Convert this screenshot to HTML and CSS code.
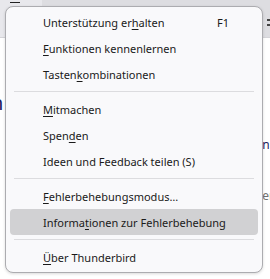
FILE: index.html
```html
<!DOCTYPE html>
<html lang="de">
<head>
    <meta charset="UTF-8">
    <link rel="stylesheet" href="styles.css">
    <title>Hilfe-Menü</title>
</head>
<body>
    <div class="toolbar">
        <div class="tab"><span class="tab-line"></span></div>
        <div class="toolbar-rest"><span class="burger"></span></div>
    </div>
    <div class="page">
        <div class="page-left">
            <span class="frag-big">n</span>
            <span class="frag-small">i:</span>
            <span class="frag-small">t</span>
        </div>
        <div class="page-right">
            <span class="frag-dark">n</span>
            <span class="frag-gray">er</span>
        </div>
    </div>

    <div class="menu">
        <div class="item"><span class="label">Unterstützung er<u>h</u>alten</span><span class="key">F1</span></div>
        <div class="item"><span class="label"><u>F</u>unktionen kennenlernen</span></div>
        <div class="item"><span class="label">Tasten<u>k</u>ombinationen</span></div>
        <div class="sep"></div>
        <div class="item"><span class="label"><u>M</u>itmachen</span></div>
        <div class="item"><span class="label">Spen<u>d</u>en</span></div>
        <div class="item"><span class="label">Ideen und Feedback teilen (S)</span></div>
        <div class="sep"></div>
        <div class="item"><span class="label"><u>F</u>ehlerbehebungsmodus…</span></div>
        <div class="item active"><span class="label">Informa<u>t</u>ionen zur Fehlerbehebung</span></div>
        <div class="sep"></div>
        <div class="item"><span class="label"><u>Ü</u>ber Thunderbird</span></div>
    </div>
</body>
</html>
```
FILE: styles.css
```css
body {
    margin: 0;
    width: 270px;
    height: 279px;
    overflow: hidden;
    position: relative;
    background: #ffffff;
    font-family: "Noto Sans", sans-serif;
}

.toolbar {
    display: flex;
    height: 37px;
    border-bottom: 1px solid #d4d4d8;
}

.tab {
    width: 42px;
    background: #e8e8ec;
    padding: 2px 0 0 10px;
    box-sizing: border-box;
}

.tab-line {
    display: block;
    width: 10px;
    height: 1px;
    background: #222;
}

.toolbar-rest {
    flex: 1;
    background: #dddde1;
    display: flex;
    justify-content: flex-end;
    padding-top: 19px;
}

.burger {
    width: 3px;
    height: 3px;
    border-top: 2px solid #444;
    border-bottom: 2px solid #444;
    box-sizing: content-box;
}

.page {
    display: flex;
    justify-content: space-between;
}

.page-left {
    display: flex;
    flex-direction: column;
    margin-left: -9px;
}

.frag-big {
    margin-top: 55px;
    font-size: 20px;
    color: #1c1b5c;
    line-height: 20px;
}

.frag-small {
    margin-top: 24px;
    font-size: 12px;
    color: #20205e;
    line-height: 14px;
}

.frag-small + .frag-small {
    margin-top: 30px;
}

.page-right {
    display: flex;
    flex-direction: column;
    margin-right: -4px;
    font-size: 12px;
}

.frag-dark {
    margin-top: 98px;
    color: #20205e;
}

.frag-gray {
    margin-top: 34px;
    color: #707070;
}

.menu {
    position: absolute;
    left: 5px;
    top: 6px;
    width: 258px;
    box-sizing: border-box;
    background: #f9f9fb;
    border: 1px solid #acacb0;
    border-radius: 8px;
    box-shadow: 0 1px 3px rgba(0, 0, 0, 0.15);
    padding: 2px 4px;
    font-size: 11px;
    color: #1a1a1a;
}

.item {
    display: flex;
    align-items: center;
    height: 26px;
    padding: 0 29px 0 33px;
    border-radius: 4px;
    white-space: nowrap;
}

.item.active {
    background: #d1d1d3;
}

.label {
    flex: 1;
}

u {
    text-underline-offset: 2px;
}

.sep {
    height: 1px;
    margin: 4px 4px 4px;
    background: #dcdcdf;
}
```
